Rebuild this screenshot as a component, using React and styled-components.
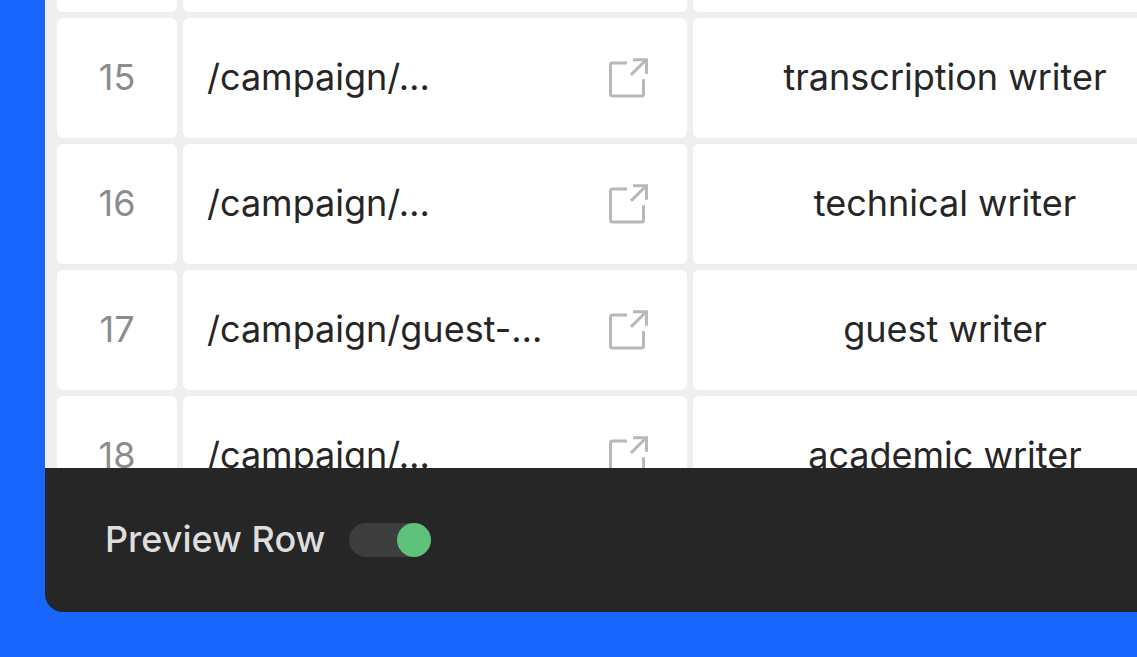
import React, { useState } from "react";
import styled, { createGlobalStyle } from "styled-components";

const GlobalStyle = createGlobalStyle`
  *, *::before, *::after { box-sizing: border-box; }
  body {
    margin: 0;
    background: #1966ff;
    font-family: Inter, "Liberation Sans", sans-serif;
    font-size: 36px;
    line-height: 44px;
    color: #262626;
  }
`;

const Page = styled.main`
  display: flex;
  height: 100vh;
  padding: 0 0 45px 45px;
`;

const Panel = styled.section`
  flex: 1;
  min-width: 0;
  display: flex;
  flex-direction: column;
  overflow: hidden;
  border-bottom-left-radius: 18px;
  background: #262626;
`;

const RowsViewport = styled.div`
  flex: 1;
  min-height: 0;
  overflow: hidden;
  padding: 0 6px;
  background: #efefef;
`;

const KeywordTable = styled.table`
  table-layout: fixed;
  width: 1152px;
  margin-top: -6px;
  border-collapse: separate;
  border-spacing: 6px;
`;

const Cell = styled.td`
  height: ${(p) => (p.$tail ? "12px" : "120px")};
  padding: ${(p) => (p.$tail ? "0" : "0 24px 2px")};
  border-radius: ${(p) => (p.$tail ? "0 0 6px 6px" : "6px")};
  background: #fff;
  text-align: ${(p) => p.$align || "center"};
  white-space: nowrap;
`;

const NumberCell = styled(Cell)`
  color: #8c8c8c;
`;

const UrlContent = styled.div`
  display: flex;
  align-items: center;
  justify-content: space-between;
  padding-right: 14px;
`;

const OpenLink = styled.a`
  display: flex;
  color: #b8b8b8;
`;

const Footer = styled.footer`
  flex: none;
  display: flex;
  align-items: center;
  height: 144px;
  padding: 0 60px;
`;

const ToggleLabel = styled.label`
  display: flex;
  align-items: center;
  gap: 24px;
  color: #dedede;
  font-weight: 500;
  cursor: pointer;
`;

const ToggleText = styled.span`
  padding-bottom: 2px;
`;

const Toggle = styled.input`
  appearance: none;
  display: flex;
  justify-content: flex-start;
  width: 82px;
  height: 34px;
  margin: 0;
  border-radius: 17px;
  background: #3d3d3d;
  cursor: pointer;

  &::before {
    content: "";
    width: 34px;
    height: 34px;
    border-radius: 50%;
    background: #8c8c8c;
  }
  &:checked { justify-content: flex-end; }
  &:checked::before { background: #5ec27a; }
`;

const rows = [
  { id: 15, url: "/campaign/…", keyword: "transcription writer" },
  { id: 16, url: "/campaign/…", keyword: "technical writer" },
  { id: 17, url: "/campaign/guest-…", keyword: "guest writer" },
  { id: 18, url: "/campaign/…", keyword: "academic writer" },
];

function ExternalIcon() {
  return (
    <svg width="40" height="42" viewBox="0 -2 40 42" fill="none" stroke="currentColor" strokeWidth="3" aria-hidden="true">
      <path d="M18 5H3.5Q1.5 5 1.5 7V36Q1.5 38 3.5 38H32.5Q34.5 38 34.5 36V21.3" />
      <path d="M24 1.7H37.5V15.7M22 16.9L37 2" />
    </svg>
  );
}

export default function App() {
  const [preview, setPreview] = useState(true);
  return (
    <>
      <GlobalStyle />
      <Page>
        <Panel>
          <RowsViewport>
            <KeywordTable>
              <colgroup>
                <col width="120" />
                <col width="504" />
                <col width="504" />
              </colgroup>
              <tbody>
                <tr>
                  <Cell $tail />
                  <Cell $tail />
                  <Cell $tail />
                </tr>
                {rows.map((row) => (
                  <tr key={row.id}>
                    <NumberCell>{row.id}</NumberCell>
                    <Cell $align="left">
                      <UrlContent>
                        <span>{row.url}</span>
                        <OpenLink href={"#row-" + row.id} aria-label={"Open " + row.keyword}>
                          <ExternalIcon />
                        </OpenLink>
                      </UrlContent>
                    </Cell>
                    <Cell>{row.keyword}</Cell>
                  </tr>
                ))}
              </tbody>
            </KeywordTable>
          </RowsViewport>
          <Footer>
            <ToggleLabel>
              <ToggleText>Preview Row</ToggleText>
              <Toggle type="checkbox" role="switch" checked={preview} onChange={(e) => setPreview(e.target.checked)} />
            </ToggleLabel>
          </Footer>
        </Panel>
      </Page>
    </>
  );
}
